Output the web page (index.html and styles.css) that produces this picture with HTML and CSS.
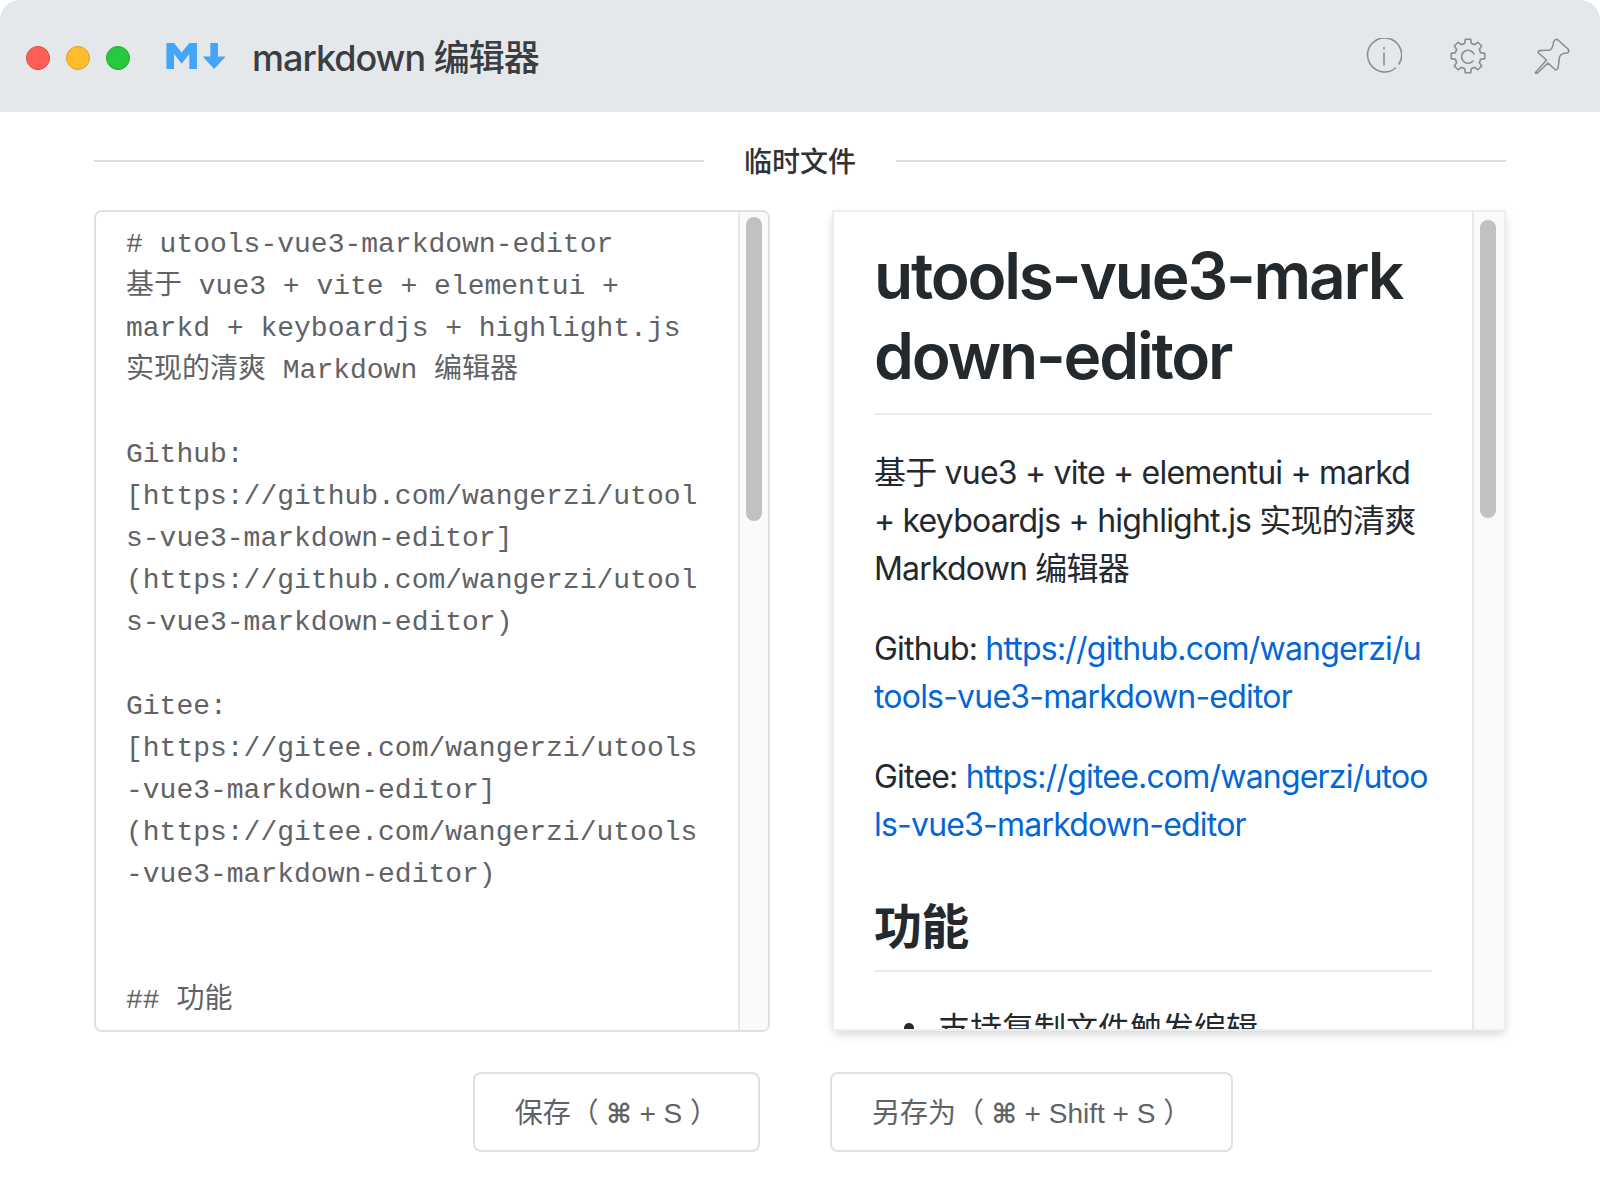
FILE: index.html
```html
<!DOCTYPE html>
<html lang="zh-CN">
<head>
<meta charset="utf-8">
<title>markdown 编辑器</title>
<link rel="stylesheet" href="styles.css">
</head>
<body>
<div class="window">
  <header class="titlebar">
    <div class="lights">
      <span class="light red"></span>
      <span class="light yellow"></span>
      <span class="light green"></span>
    </div>
    <svg class="logo" viewBox="30 30 155 68" aria-hidden="true"><path d="M30 98V30h20l20 25 20-25h20v68H90V59L70 84 50 59v39zm125 0l-30-33h20V30h20v35h20z"/></svg>
    <h1 class="app-title">markdown 编辑器</h1>
    <div class="tools">
      <svg class="tool" viewBox="0 0 36 36" aria-hidden="true">
        <path d="M29.5 30A17 17 0 1 1 33 26"/>
        <path d="M18 15v12"/>
        <path d="M18 9.500v1.500"/>
      </svg>
      <svg class="tool" viewBox="0 0 36 36" aria-hidden="true">
        <defs><polyline id="tooth" points="13.03,5.99 14.64,5.44 15.34,1.21 20.66,1.21 21.36,5.44 22.97,5.99"/></defs>
        <use href="#tooth"/>
        <use href="#tooth" transform="rotate(45 18 18)"/>
        <use href="#tooth" transform="rotate(90 18 18)"/>
        <use href="#tooth" transform="rotate(135 18 18)"/>
        <use href="#tooth" transform="rotate(180 18 18)"/>
        <use href="#tooth" transform="rotate(225 18 18)"/>
        <use href="#tooth" transform="rotate(270 18 18)"/>
        <use href="#tooth" transform="rotate(315 18 18)"/>
        <path d="M24 16A6.500 6.500 0 1 0 23 23"/>
      </svg>
      <svg class="tool" viewBox="0 0 36 36" aria-hidden="true">
        <path d="M1.500 34.500L12.500 22 4 14.500Q4.500 12 9 12.500L16 12Q19 10 19.500 4.500Q21 0 24 2L34 11Q36 14 33 15Q27 15 25.500 19L24.500 27Q24 33 21 31.500L14 25 3.500 35Q1 36 1.500 34.500Z"/>
      </svg>
    </div>
  </header>

  <div class="divider"><span class="divider-text">临时文件</span></div>

  <main class="panes">
    <section class="editor">
      <pre class="source"># utools-vue3-markdown-editor
基于 vue3 + vite + elementui +
markd + keyboardjs + highlight.js
实现的清爽 Markdown 编辑器

Github:
[https://github.com/wangerzi/utool
s-vue3-markdown-editor]
(https://github.com/wangerzi/utool
s-vue3-markdown-editor)

Gitee:
[https://gitee.com/wangerzi/utools
-vue3-markdown-editor]
(https://gitee.com/wangerzi/utools
-vue3-markdown-editor)


## 功能</pre>
      <div class="track"><div class="thumb"></div></div>
    </section>

    <section class="preview">
      <article class="doc">
        <h1 class="doc-h1">utools-vue3-mark<br>down-editor</h1>
        <p class="doc-p">基于 vue3 + vite + elementui + markd<br>+ keyboardjs + highlight.js 实现的清爽<br>Markdown 编辑器</p>
        <p class="doc-p">Github: <a class="doc-link" href="#">https://github.com/wangerzi/u<br>tools-vue3-markdown-editor</a></p>
        <p class="doc-p">Gitee: <a class="doc-link" href="#">https://gitee.com/wangerzi/utoo<br>ls-vue3-markdown-editor</a></p>
        <h2 class="doc-h2">功能</h2>
        <ul class="doc-list"><li class="doc-item">支持复制文件触发编辑</li></ul>
      </article>
      <div class="track track-preview"><div class="thumb thumb-preview"></div></div>
    </section>
  </main>

  <footer class="actions">
    <button class="btn btn-save" type="button">保存（ <span class="cmd">⌘</span> + S ）</button>
    <button class="btn btn-saveas" type="button">另存为（ <span class="cmd">⌘</span> + Shift + S ）</button>
  </footer>
</div>
</body>
</html>
```
FILE: styles.css
```css
* { box-sizing: border-box; }
html, body { margin: 0; background: #fff; }
body { width: 1600px; height: 1200px; overflow: hidden; font-family: "Liberation Sans", "Noto Sans CJK SC", sans-serif; }
.window { width: 1600px; height: 1200px; display: flex; flex-direction: column; }

.titlebar { height: 112px; background: #e5e8eb; border-radius: 20px 20px 0 0; display: flex; align-items: center; padding: 3px 0 0 26px; flex: none; }
.lights { display: flex; gap: 16px; }
.light { width: 24px; height: 24px; border-radius: 50%; border: 1px solid; }
.red { background: #ff5f57; border-color: #e0443e; }
.yellow { background: #ffbd2e; border-color: #dea123; }
.green { background: #28c840; border-color: #1aab29; }
.logo { width: 60px; height: 26px; fill: #42a5f5; margin: 0 0 3px 36px; flex: none; }
.app-title { margin: 0 0 0 26px; font-size: 36px; font-weight: 500; color: #3a3d42; font-family: "Inter", "Noto Sans CJK SC", sans-serif; line-height: 1; letter-spacing: -1px; }
.tools { margin: 0 30px 4px auto; display: flex; gap: 48px; }
.tool { width: 36px; height: 36px; fill: none; stroke: #8b8e92; stroke-width: 1.6; stroke-linecap: round; stroke-linejoin: round; display: block; }

.divider { display: flex; align-items: center; gap: 40px; margin: 28px 94px 0; height: 42px; flex: none; }
.divider::before, .divider::after { content: ""; flex: 1; height: 2px; background: #dedede; }
.divider-text { font-size: 28px; font-weight: 500; color: #303133; line-height: 42px; padding-bottom: 3px; font-family: "Noto Sans CJK SC", sans-serif; }

.panes { display: grid; grid-template-columns: 676px 675px; column-gap: 61px; margin: 28px 0 0 94px; height: 822px; flex: none; }
.editor { display: flex; border: 2px solid #e0e0e0; border-radius: 8px; overflow: hidden; background: #fff; }
.source { flex: 1; margin: 0; padding: 12px 30px 0; font-family: "Liberation Mono", "Noto Sans CJK SC", monospace; font-size: 28px; line-height: 42px; color: #606266; overflow: hidden; white-space: pre; }
.track { width: 30px; flex: none; background: #fafafa; border-left: 2px solid #e8e8e8; padding: 5px 5px 0 6px; }
.thumb { width: 16px; height: 304px; border-radius: 8px; background: #c1c1c1; }

.preview { display: flex; height: 817px; margin: 2px 0 0 3px; width: 670px; background: #fff; box-shadow: 0 0 0 2px #eee, 0 4px 10px rgba(0,0,0,.2); overflow: hidden; }
.doc { flex: 1; padding: 24px 40px 0 40px; color: #24292e; font-size: 32px; line-height: 48px; overflow: hidden; font-family: "Inter", "Noto Sans CJK SC", sans-serif; letter-spacing: -0.8px; white-space: nowrap; }
.doc-h1 { margin: 0 0 34px; font-size: 64px; line-height: 80px; font-weight: 600; letter-spacing: -2.2px; padding-bottom: 17px; border-bottom: 2px solid #eaecef; }
.doc-p { margin: 0 0 32px; }
.doc-link { color: #0366d6; text-decoration: none; }
.doc-h2 { margin: 48px 0 33px; font-size: 48px; line-height: 60px; font-weight: 600; padding-bottom: 13px; border-bottom: 2px solid #eaecef; }
.doc-list { margin: 0; padding-left: 64px; list-style: none; }
.doc-item { position: relative; letter-spacing: 0; }
.doc-item::before { content: ""; position: absolute; left: -34px; top: 18px; width: 10px; height: 10px; border-radius: 50%; background: #24292e; }
.track-preview { width: 32px; padding: 8px 9px 0 6px; }
.thumb-preview { height: 298px; }

.actions { display: grid; grid-template-columns: 666px auto; column-gap: 70px; margin: 40px 0 0 94px; flex: none; justify-content: start; }
.btn { height: 80px; padding: 0 40px 2px; background: #fff; border: 2px solid #e0e0e0; border-radius: 8px; color: #606266; font-size: 28px; font-family: "Liberation Sans", "Noto Sans CJK SC", sans-serif; white-space: nowrap; }
.cmd { font-family: "DejaVu Sans", sans-serif; font-size: 27px; font-weight: 700; }
.btn-save { justify-self: end; }
```
